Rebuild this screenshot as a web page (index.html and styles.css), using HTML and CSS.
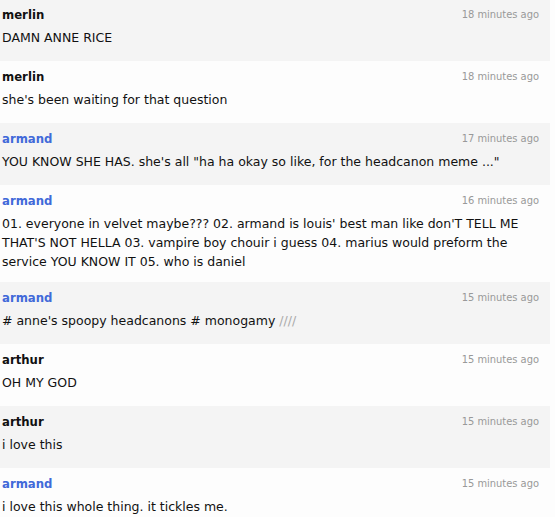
FILE: index.html
```html
<!DOCTYPE html>
<html>
<head>
<meta charset="utf-8">
<link rel="stylesheet" href="styles.css">
</head>
<body>
<div class="chat">
  <div class="msg alt">
    <div class="head"><span class="name">merlin</span><span class="time">18 minutes ago</span></div>
    <div class="text">DAMN ANNE RICE</div>
  </div>
  <div class="msg">
    <div class="head"><span class="name">merlin</span><span class="time">18 minutes ago</span></div>
    <div class="text">she's been waiting for that question</div>
  </div>
  <div class="msg alt">
    <div class="head"><span class="name blue">armand</span><span class="time">17 minutes ago</span></div>
    <div class="text">YOU KNOW SHE HAS. she's all "ha ha okay so like, for the headcanon meme ..."</div>
  </div>
  <div class="msg">
    <div class="head"><span class="name blue">armand</span><span class="time">16 minutes ago</span></div>
    <div class="text">01. everyone in velvet maybe??? 02. armand is louis' best man like don'T TELL ME THAT'S NOT HELLA 03. vampire boy chouir i guess 04. marius would preform the service YOU KNOW IT 05. who is daniel</div>
  </div>
  <div class="msg alt">
    <div class="head"><span class="name blue">armand</span><span class="time">15 minutes ago</span></div>
    <div class="text"># anne's spoopy headcanons # monogamy <span class="muted">////</span></div>
  </div>
  <div class="msg">
    <div class="head"><span class="name">arthur</span><span class="time">15 minutes ago</span></div>
    <div class="text">OH MY GOD</div>
  </div>
  <div class="msg alt">
    <div class="head"><span class="name">arthur</span><span class="time">15 minutes ago</span></div>
    <div class="text">i love this</div>
  </div>
  <div class="msg">
    <div class="head"><span class="name blue">armand</span><span class="time">15 minutes ago</span></div>
    <div class="text">i love this whole thing. it tickles me.</div>
  </div>
</div>
</body>
</html>
```
FILE: styles.css
```css
html, body {
  margin: 0;
  padding: 0;
  background: #fdfdfd;
}
body {
  font-family: "DejaVu Sans Condensed", "DejaVu Sans", sans-serif;
  font-size: 13px;
  color: #111;
  overflow: hidden;
}
.chat {
  width: 550px;
  margin-top: -1px;
}
.msg {
  min-height: 62px;
  box-sizing: border-box;
  padding: 6px 11px 11px 2px;
  background: #fdfdfd;
}
.msg.alt {
  background: #f4f4f4;
}
.head {
  display: flex;
  justify-content: space-between;
  align-items: baseline;
  line-height: 19px;
}
.name {
  font-weight: bold;
  color: #111;
}
.name.blue {
  color: #4169d9;
}
.time {
  font-size: 11px;
  color: #999;
  position: relative;
  top: -1px;
}
.text {
  margin-top: 3px;
  line-height: 19px;
  font-family: "DejaVu Sans", sans-serif;
  font-size: 12.5px;
}
.muted {
  color: #aaa;
}
```
